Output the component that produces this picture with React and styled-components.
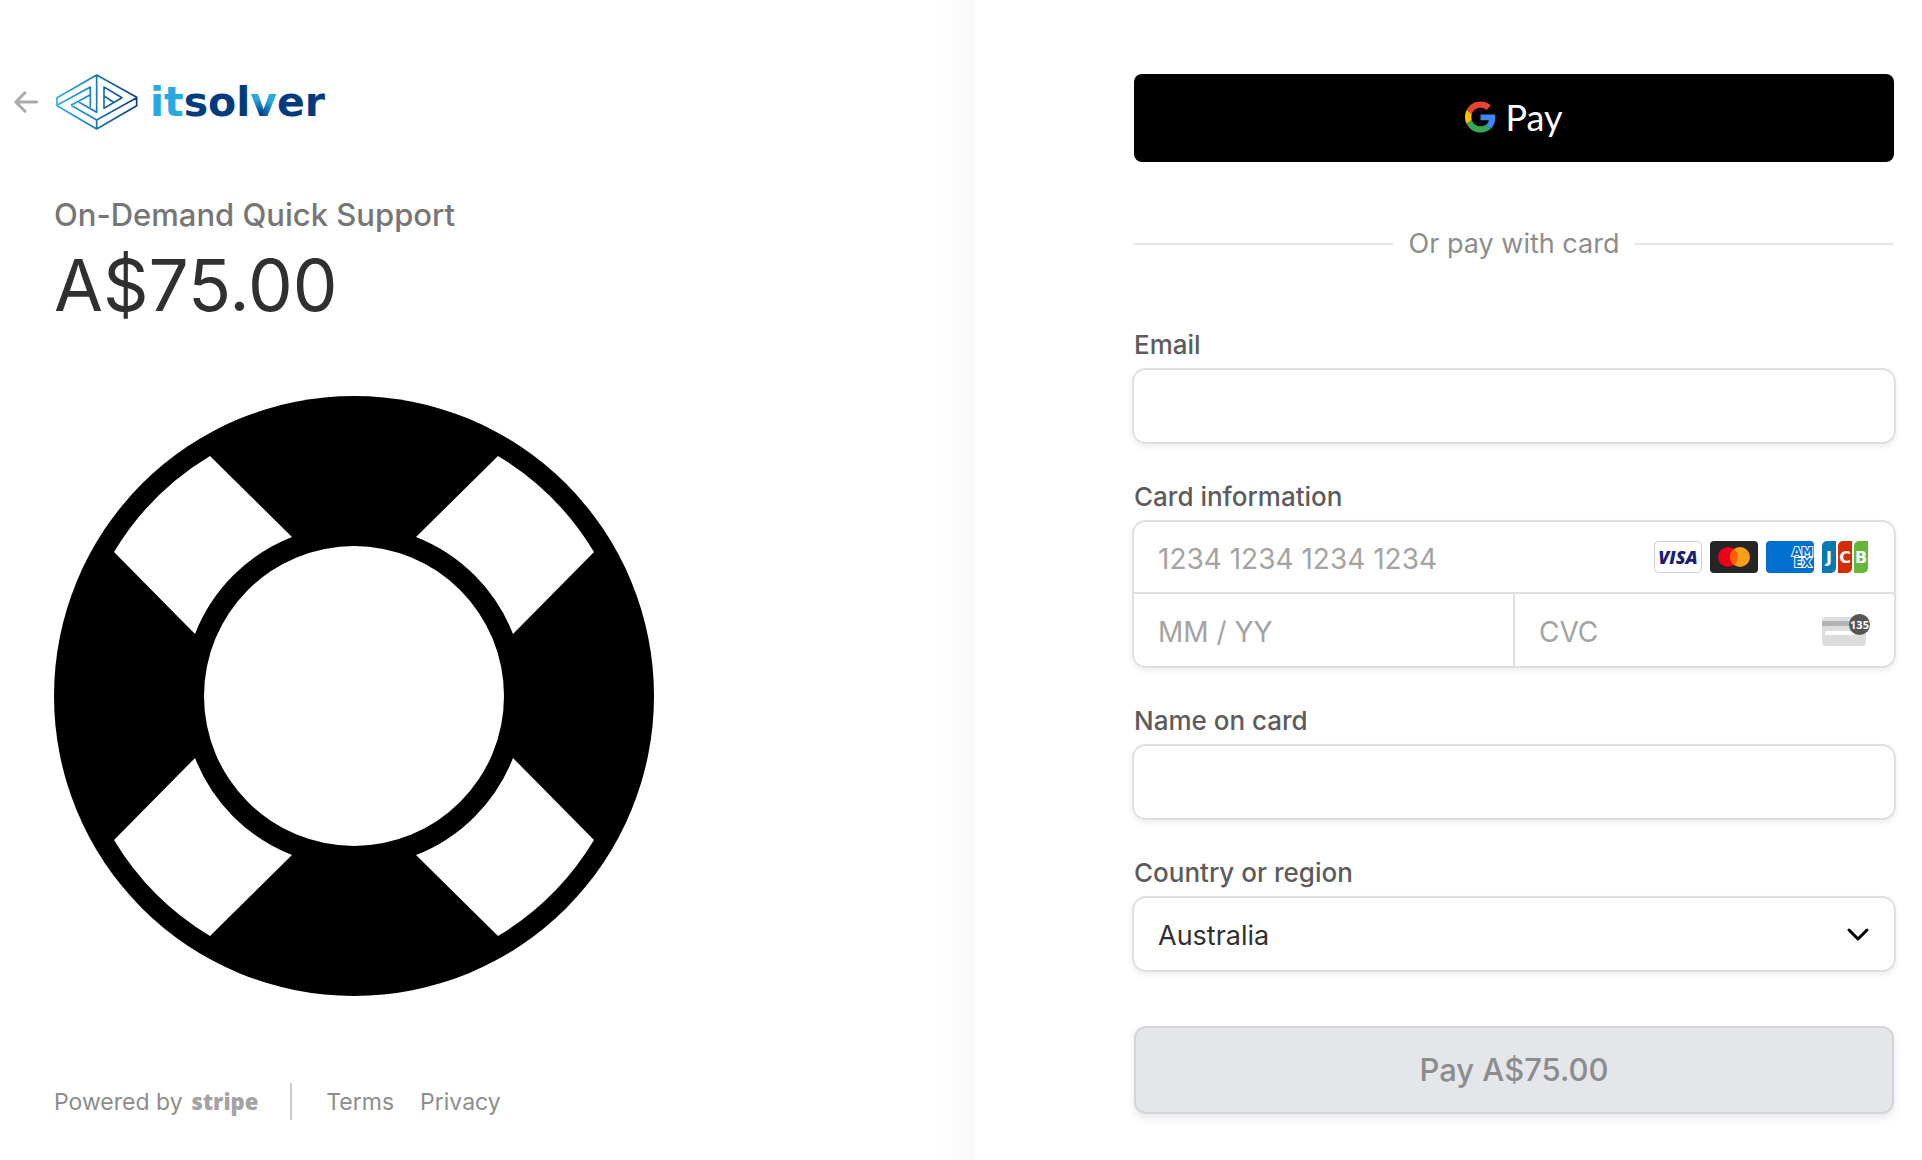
import React from "react";
import styled, { createGlobalStyle, css } from "styled-components";

const sans = `Inter, "Liberation Sans", sans-serif`;

const GlobalStyle = createGlobalStyle`
  *, *::before, *::after { box-sizing: border-box; }
  body {
    margin: 0;
    background: #fff;
    color: #303030;
    font-family: ${sans};
    -webkit-font-smoothing: antialiased;
  }
`;

const Page = styled.div`
  display: grid;
  grid-template-columns: 974fr 948fr;
  min-height: 100vh;
`;

const Summary = styled.section`
  display: flex;
  flex-direction: column;
  padding: 74px 40px 40px 54px;
  background: linear-gradient(to left, #f9f9f9, #fdfdfd 24px, #fff 44px);
`;

const Header = styled.header`
  display: flex;
  align-items: center;
  gap: 16px;
  height: 56px;
  margin: 0 0 63px -40px;
`;

const BackLink = styled.a`
  display: flex;
  color: #a9a9a9;
`;

const Brand = styled.span`
  display: flex;
  align-items: center;
  gap: 12px;
  padding-left: 2px;
`;

const Wordmark = styled.span`
  font-family: "DejaVu Sans", sans-serif;
  font-size: 41px;
  line-height: 56px;
  font-weight: 700;
  color: #003b80;
`;

const Light = styled.span`
  color: #29a9e1;
`;

const Shaded = styled.span`
  color: transparent;
  background: radial-gradient(circle at 40% 75%, #003b80, #29a9e1 40%);
  background-clip: text;
`;

const Product = styled.h1`
  margin: 0 0 8px;
  font-size: 31px;
  line-height: 44px;
  font-weight: 500;
  color: #767676;
`;

const Price = styled.p`
  margin: 0 0 71px;
  font-size: 71px;
  line-height: 80px;
  color: #303030;
`;

const ProductImage = styled.svg`
  display: block;
  width: 600px;
  max-width: 100%;
  height: auto;
`;

const Footer = styled.footer`
  display: flex;
  align-items: center;
  margin-top: auto;
  font-size: 23px;
  line-height: 36px;
  color: #8d8d8d;
`;

const FooterLink = styled.a`
  color: inherit;
  text-decoration: none;
`;

const Powered = styled(FooterLink)`
  display: flex;
  align-items: baseline;
  gap: 9px;
  padding-right: 32px;
  border-right: 2px solid #cbcbcb;
`;

const StripeMark = styled.b`
  font-family: "Open Sans", sans-serif;
  font-size: 22px;
  font-weight: 800;
  color: #a3a3a3;
`;

const Legal = styled.nav`
  display: flex;
  gap: 26px;
  padding-left: 34px;
`;

const Payment = styled.main`
  padding: 74px 28px 40px 160px;
  background: #fff;
`;

const WalletButton = styled.button`
  display: flex;
  align-items: center;
  justify-content: center;
  gap: 9px;
  width: 100%;
  height: 88px;
  padding: 0 0 2px;
  border: 0;
  border-radius: 8px;
  background: #000;
  color: #fff;
  font: 400 36px/44px Lato, sans-serif;
`;

const Divider = styled.div`
  display: flex;
  align-items: center;
  gap: 16px;
  margin: 60px 0 62px;
  font-size: 27px;
  line-height: 44px;
  color: #8d8d8d;

  &::before, &::after {
    content: "";
    flex: 1;
    height: 2px;
    background: #e6e6e6;
  }
`;

const Form = styled.form`
  display: flex;
  flex-direction: column;
  gap: 38px;
`;

const labelText = css`
  display: block;
  margin: 0 0 8px;
  padding: 0;
  font-size: 26px;
  line-height: 34px;
  font-weight: 500;
  color: #5c5c5c;
`;

const Field = styled.div``;
const Label = styled.label`${labelText}`;
const CardGroup = styled.fieldset`
  min-width: 0;
  margin: 0;
  padding: 0;
  border: 0;
`;
const Legend = styled.legend`${labelText}`;

const Shell = styled.div`
  display: grid;
  grid-template-columns: ${(p) => (p.$split ? "1fr 1fr" : "1fr")};
  gap: 2px;
  overflow: hidden;
  margin: -2px;
  border: 2px solid #e0e0e0;
  border-radius: 14px;
  background: #e0e0e0;
  box-shadow: 0 3px 6px rgba(0, 0, 0, 0.07);
`;

const Cell = styled.div`
  display: flex;
  align-items: center;
  grid-column: ${(p) => (p.$wide ? "1 / -1" : "auto")};
  height: ${(p) => (p.$wide ? "70px" : "72px")};
  padding-right: 24px;
  background: #fff;
`;

const controlText = css`
  width: 100%;
  min-width: 0;
  height: 72px;
  border: 0;
  outline: 0;
  background: #fff;
  color: #303030;
  font: 400 28px/40px ${sans};
`;

const TextInput = styled.input`
  ${controlText}
  flex: 1;
  height: 100%;
  padding: 4px 0 0 24px;
  &::placeholder { color: #a3a3a3; opacity: 1; }
`;

const Select = styled.select`
  ${controlText}
  grid-area: 1 / 1;
  appearance: none;
  padding: 4px 64px 0 24px;
  font-size: 27px;
`;

const Chevron = styled.svg`
  grid-area: 1 / 1;
  place-self: center end;
  margin-right: 24px;
  pointer-events: none;
`;

const Brands = styled.div`
  display: flex;
  gap: 8px;
`;

const PayButton = styled.button`
  width: 100%;
  height: 88px;
  margin-top: 18px;
  border: 2px solid #d3d4d8;
  border-radius: 12px;
  background: #e5e6e9;
  color: #8b8c8e;
  font: 500 31px/44px ${sans};
  box-shadow: 0 4px 8px rgba(60, 66, 87, 0.12);
`;

const BackArrow = () => (
  <svg width="24" height="22" viewBox="0 0 24 22" fill="none" stroke="currentColor" strokeWidth="3" strokeLinecap="round" strokeLinejoin="round">
    <path d="M11 1.8 1.8 11l9.2 9.2M2 11h20.6" />
  </svg>
);

const BrandIcon = () => (
  <svg width="82" height="56" viewBox="168 71 246 168" fill="none" stroke="url(#brandStroke)" strokeWidth="5" strokeLinejoin="round">
    <defs>
      <linearGradient id="brandStroke" gradientUnits="userSpaceOnUse" x1="170" y1="0" x2="410" y2="0">
        <stop offset="0" stopColor="#2fb0e6" />
        <stop offset="0.5" stopColor="#1a79b8" />
        <stop offset="1" stopColor="#0a3f85" />
      </linearGradient>
    </defs>
    <path d="M290 74 410 141V166L290 236 171 166V142ZM290 74V186L236 155M171 165 271 110V171M213 165 290 209 410 142M290 209V236M213 165 271 133M312 110V174L366 142ZM312 137 340 155" />
  </svg>
);

const patch = "M-144 -240L-62 -159A171 171 0 0 0 -159 -62L-240 -144A281 281 0 0 1 -144 -240Z";

const LifeRing = () => (
  <ProductImage viewBox="-300 -300 600 600" role="img" aria-label="Life ring">
    <circle r="300" />
    <circle r="150" fill="#fff" />
    {[0, 90, 180, 270].map((a) => (
      <path key={a} d={patch} fill="#fff" transform={`rotate(${a})`} />
    ))}
  </ProductImage>
);

const GoogleG = () => (
  <svg width="31" height="32" viewBox="0 0 48 48" aria-hidden="true">
    <path fill="#EA4335" d="M24 9.5c3.54 0 6.71 1.22 9.21 3.6l6.85-6.85C35.9 2.38 30.47 0 24 0 14.62 0 6.51 5.38 2.56 13.22l7.98 6.19C12.43 13.72 17.74 9.5 24 9.5z" />
    <path fill="#4285F4" d="M46.98 24.55c0-1.57-.15-3.09-.38-4.55H24v9.02h12.94c-.58 2.96-2.26 5.48-4.78 7.18l7.73 6c4.51-4.18 7.09-10.36 7.09-17.65z" />
    <path fill="#FBBC05" d="M10.53 28.59c-.48-1.45-.76-2.99-.76-4.59s.27-3.14.76-4.59l-7.98-6.19C.92 16.46 0 20.12 0 24c0 3.88.92 7.54 2.56 10.78l7.97-6.19z" />
    <path fill="#34A853" d="M24 48c6.48 0 11.93-2.13 15.89-5.81l-7.73-6c-2.15 1.45-4.92 2.3-8.16 2.3-6.26 0-11.57-4.22-13.47-9.91l-7.98 6.19C6.51 42.62 14.62 48 24 48z" />
  </svg>
);

const Visa = () => (
  <svg width="48" height="32" viewBox="0 0 48 32" role="img" aria-label="Visa">
    <rect x="0.5" y="0.5" width="47" height="31" rx="4" fill="#fff" stroke="#ccc" />
    <text x="24" y="22.5" textAnchor="middle" fontFamily="Open Sans, sans-serif" fontSize="18" fontWeight="800" fontStyle="italic" fill="#1a1f71">VISA</text>
  </svg>
);

const Mastercard = () => (
  <svg width="48" height="32" viewBox="0 0 48 32" role="img" aria-label="Mastercard">
    <rect width="48" height="32" rx="4" fill="#252525" />
    <circle cx="18" cy="16" r="10" fill="#eb001b" />
    <circle cx="30" cy="16" r="10" fill="#f79e1b" />
    <path d="M24 8a10 10 0 0 1 0 16a10 10 0 0 1 0-16z" fill="#ff5f00" />
  </svg>
);

const Amex = () => (
  <svg width="48" height="32" viewBox="0 0 48 32" role="img" aria-label="American Express">
    <defs><clipPath id="amexClip"><rect width="48" height="32" rx="4" /></clipPath></defs>
    <g clipPath="url(#amexClip)">
      <rect width="48" height="32" fill="#016fd0" />
      <g fontFamily="DejaVu Sans, sans-serif" fontSize="12" fontWeight="700" fill="#016fd0" stroke="#fff" strokeWidth="2" paintOrder="stroke">
        <text x="26" y="15">AM</text>
        <text x="28" y="26">EX</text>
      </g>
    </g>
  </svg>
);

const Jcb = () => (
  <svg width="48" height="32" viewBox="0 0 48 32" role="img" aria-label="JCB">
    <path d="M5 0h9v27a5 5 0 0 1-5 5H0V5a5 5 0 0 1 5-5z" fill="#047ab1" />
    <path d="M21 0h9v27a5 5 0 0 1-5 5h-9V5a5 5 0 0 1 5-5z" fill="#d42d06" />
    <path d="M37 0h9v27a5 5 0 0 1-5 5h-9V5a5 5 0 0 1 5-5z" fill="#67b637" />
    <g fontFamily="DejaVu Sans, sans-serif" fontSize="16" fontWeight="700" fill="#fff" textAnchor="middle">
      <text x="7" y="22">J</text>
      <text x="23" y="22">C</text>
      <text x="39" y="22">B</text>
    </g>
  </svg>
);

const CvcIcon = () => (
  <svg width="48" height="32" viewBox="0 0 48 32" aria-hidden="true">
    <rect y="3" width="44" height="29" rx="4" fill="#ddd" />
    <rect y="7" width="44" height="5" fill="#b3b3b3" />
    <rect x="3" y="17" width="30" height="4" fill="#fff" />
    <circle cx="37.5" cy="10.5" r="10.5" fill="#555" />
    <text x="37.5" y="14.5" textAnchor="middle" fontFamily="Open Sans, sans-serif" fontSize="11" fontWeight="700" fill="#fff">135</text>
  </svg>
);

export default function App() {
  return (
    <>
      <GlobalStyle />
      <Page>
        <Summary>
          <Header>
            <BackLink href="#back" aria-label="Back"><BackArrow /></BackLink>
            <Brand>
              <BrandIcon />
              <Wordmark><Light>it</Light>sol<Shaded>v</Shaded>er</Wordmark>
            </Brand>
          </Header>
          <Product>On-Demand Quick Support</Product>
          <Price>A$75.00</Price>
          <LifeRing />
          <Footer>
            <Powered href="#stripe">Powered by <StripeMark>stripe</StripeMark></Powered>
            <Legal>
              <FooterLink href="#terms">Terms</FooterLink>
              <FooterLink href="#privacy">Privacy</FooterLink>
            </Legal>
          </Footer>
        </Summary>
        <Payment>
          <WalletButton type="button"><GoogleG />Pay</WalletButton>
          <Divider>Or pay with card</Divider>
          <Form>
            <Field>
              <Label htmlFor="email">Email</Label>
              <Shell><Cell><TextInput id="email" type="email" /></Cell></Shell>
            </Field>
            <CardGroup>
              <Legend>Card information</Legend>
              <Shell $split>
                <Cell $wide>
                  <TextInput aria-label="Card number" placeholder="1234 1234 1234 1234" />
                  <Brands><Visa /><Mastercard /><Amex /><Jcb /></Brands>
                </Cell>
                <Cell><TextInput aria-label="Expiry date" placeholder="MM / YY" /></Cell>
                <Cell><TextInput aria-label="Security code" placeholder="CVC" /><CvcIcon /></Cell>
              </Shell>
            </CardGroup>
            <Field>
              <Label htmlFor="name">Name on card</Label>
              <Shell><Cell><TextInput id="name" /></Cell></Shell>
            </Field>
            <Field>
              <Label htmlFor="country">Country or region</Label>
              <Shell>
                <Select id="country" defaultValue="Australia"><option>Australia</option></Select>
                <Chevron width="24" height="16" viewBox="0 0 24 16" fill="none" stroke="#000" strokeWidth="3" strokeLinecap="round" strokeLinejoin="round">
                  <path d="M3 4l9 9 9-9" />
                </Chevron>
              </Shell>
            </Field>
            <PayButton type="submit" disabled>Pay A$75.00</PayButton>
          </Form>
        </Payment>
      </Page>
    </>
  );
}
